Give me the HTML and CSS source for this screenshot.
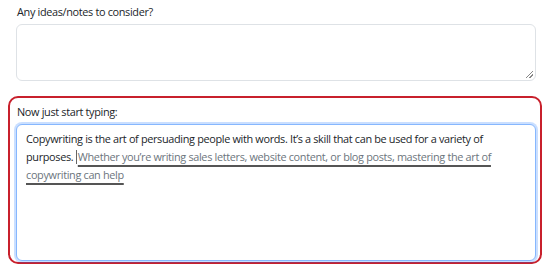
FILE: index.html
```html
<!DOCTYPE html>
<html>
<head>
<meta charset="utf-8">
<link rel="stylesheet" href="styles.css">
</head>
<body>
<div class="page">
  <div class="field">
    <label class="label">Any ideas/notes to consider?</label>
    <div class="notes"><span class="grip"></span></div>
  </div>
  <div class="typing-box">
    <label class="label">Now just start typing:</label>
    <div class="editor"><span class="typed">Copywriting is the art of persuading people with words. It’s a skill that can be used for a variety of purposes. </span><span class="caret"></span><span class="ghost">Whether you’re writing sales letters, website content, or blog posts, mastering the art of copywriting can help</span></div>
  </div>
</div>
</body>
</html>
```

FILE: styles.css
```css
* { box-sizing: border-box; }
html, body { margin: 0; padding: 0; background: #fff; }
body {
  font-family: "Open Sans", "Noto Sans", sans-serif;
  font-size: 10.9px;
  letter-spacing: -0.34px;
  color: #212529;
}
.page {
  width: 550px;
  padding: 2px 8px 0 8px;
}
.field {
  padding: 0 8px;
}
.label {
  display: block;
  padding-left: 1px;
  line-height: 19px;
  margin-bottom: 3px;
}
.notes {
  position: relative;
  width: 520px;
  height: 57px;
  border: 1px solid #dee2e6;
  border-radius: 6px;
  background: #fff;
}
.grip {
  position: absolute;
  right: 2px;
  bottom: 2px;
  width: 7px;
  height: 7px;
  background: linear-gradient(135deg, transparent 45%, #888 45%, #888 55%, transparent 55%, transparent 70%, #888 70%, #888 80%, transparent 80%);
}
.typing-box {
  margin-top: 15px;
  width: 534px;
  height: 168px;
  border: 2px solid #c8202c;
  border-radius: 10px;
  padding: 4px 4px 0 6px;
}
.editor {
  width: 520px;
  height: 137px;
  border: 1px solid #86b7fe;
  box-shadow: 0 0 0 2px rgba(13, 110, 253, 0.22);
  border-radius: 6px;
  padding: 5px 9px;
  line-height: 18px;
  background: #fff;
}
.typed { color: #212529; }
.caret {
  display: inline-block;
  width: 1px;
  height: 14px;
  background: #666;
  vertical-align: -3px;
  margin-right: 1px;
}
.ghost {
  color: #6c757d;
  text-decoration: underline;
  text-decoration-color: #555;
  text-decoration-thickness: 2px;
  text-underline-offset: 4px;
}
```
